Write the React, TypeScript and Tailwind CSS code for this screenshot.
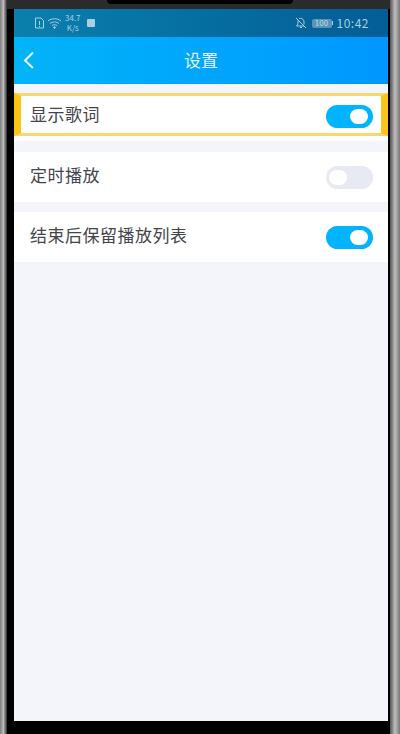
const font = { fontFamily: '"Noto Sans CJK SC", "Liberation Sans", sans-serif' };

function Toggle({ on }: { on: boolean }) {
  return (
    <div className={`flex h-[23px] w-[47px] items-center rounded-full ${on ? "justify-end bg-[#00b4ff] pr-[5px]" : "justify-start bg-[#e8eaf3] pl-[3px]"}`}>
      <div className="h-[15px] w-[18px] rounded-full bg-white" />
    </div>
  );
}

function Row({ label, on }: { label: string; on: boolean }) {
  return (
    <div className="flex h-[50px] items-center justify-between bg-white pl-[16px] pr-[15px]">
      <span className="pb-[4px] text-[17px] tracking-[0.5px] text-[#44444c]">{label}</span>
      <Toggle on={on} />
    </div>
  );
}

export default function App() {
  return (
    <div style={font} className="flex h-[734px] w-[400px] overflow-hidden bg-black">
      <div className="h-full w-[7px] bg-gradient-to-r from-[#7c7c7c] via-[#bcbcbc] to-[#2e2e2e]" />
      <div className="flex h-full flex-1 flex-col">
        <div className="relative h-[9px] bg-[#2b2b2b]">
          <div className="absolute left-[100px] top-0 h-[4px] w-[186px] rounded-b-[10px] bg-black" />
        </div>
        <div className="flex flex-1">
          <div className="w-[7px] bg-black" />
          <div className="flex flex-1 flex-col bg-[#f4f5fa]">
            <div className="flex h-[28px] items-center justify-between bg-gradient-to-r from-[#0a80ad] to-[#045d96] pl-[20px] pr-[19px] text-[#a9cfe0]">
              <div className="flex items-center">
                <svg width="11" height="12" viewBox="0 0 11 12" fill="none" stroke="currentColor" strokeWidth="1">
                  <path d="M1.500 1h5.500l2.500 2.500V11h-8z" />
                  <path d="M5.500 4v4M5.500 9v1" />
                </svg>
                <svg className="ml-[2px]" width="15" height="12" viewBox="0 0 15 12" fill="none" stroke="currentColor" strokeWidth="1">
                  <path d="M1 4c3.500-3 9.500-3 13 0M3 6.500c2.500-2 6.500-2 9 0M5 8.500c1.500-1 3.500-1 5 0" />
                  <circle cx="7.500" cy="10.500" r="0.800" fill="currentColor" />
                </svg>
                <div className="ml-[3px] flex flex-col items-center text-[8px] leading-[10px]">
                  <span>34.7</span>
                  <span>K/s</span>
                </div>
                <div className="ml-[6px] h-[8px] w-[8px] rounded-[1px] bg-[#a9cfe0]" />
              </div>
              <div className="flex items-center">
                <svg width="12" height="12" viewBox="0 0 12 12" fill="none" stroke="currentColor" strokeWidth="1">
                  <path d="M1 1l10 10M3 3.500V7L1.500 9H9M4 1.800C6 .5 9 2 9 5v2.500M5 10.500h2" />
                </svg>
                <div className="ml-[5px] flex h-[9px] w-[20px] items-center justify-center rounded-[2px] bg-[#5b92b5] text-[8px] leading-none text-[#c3dbe8]">100</div>
                <div className="h-[4px] w-[1px] bg-[#a9cfe0]" />
                <span className="ml-[4px] text-[12px] tracking-[0.5px]">10:42</span>
              </div>
            </div>
            <div className="relative flex h-[47px] items-center justify-center bg-gradient-to-r from-[#04b4f8] to-[#0097ff]">
              <svg className="absolute left-[9px] top-[14px]" width="12" height="18" viewBox="0 0 12 18" fill="none" stroke="#e6f6ff" strokeWidth="2">
                <path d="M10 1.500 2 9.500l8 7.500" />
              </svg>
              <span className="pb-[2px] text-[17px] text-[#e2f4ff]">设置</span>
            </div>
            <div className="mt-[9px] flex h-[48px] flex-col bg-white">
              <div className="flex h-[43px] items-center justify-between border-x-[7px] border-y-[3px] border-x-[#fcc419] border-y-[#f9d76a] pl-[9px] pr-[8px]">
                <span className="pb-[2px] text-[17px] tracking-[0.5px] text-[#44444c]">显示歌词</span>
                <div className="mt-[4px]">
                  <Toggle on />
                </div>
              </div>
            </div>
            <div className="mt-[11px]">
              <Row label="定时播放" on={false} />
            </div>
            <div className="mt-[10px]">
              <Row label="结束后保留播放列表" on />
            </div>
          </div>
          <div className="w-[2px] bg-black" />
        </div>
        <div className="h-[13px] bg-black" />
      </div>
      <div className="h-full w-[10px] bg-gradient-to-r from-[#555555] via-[#c0c0c0] to-[#777777]" />
    </div>
  );
}
